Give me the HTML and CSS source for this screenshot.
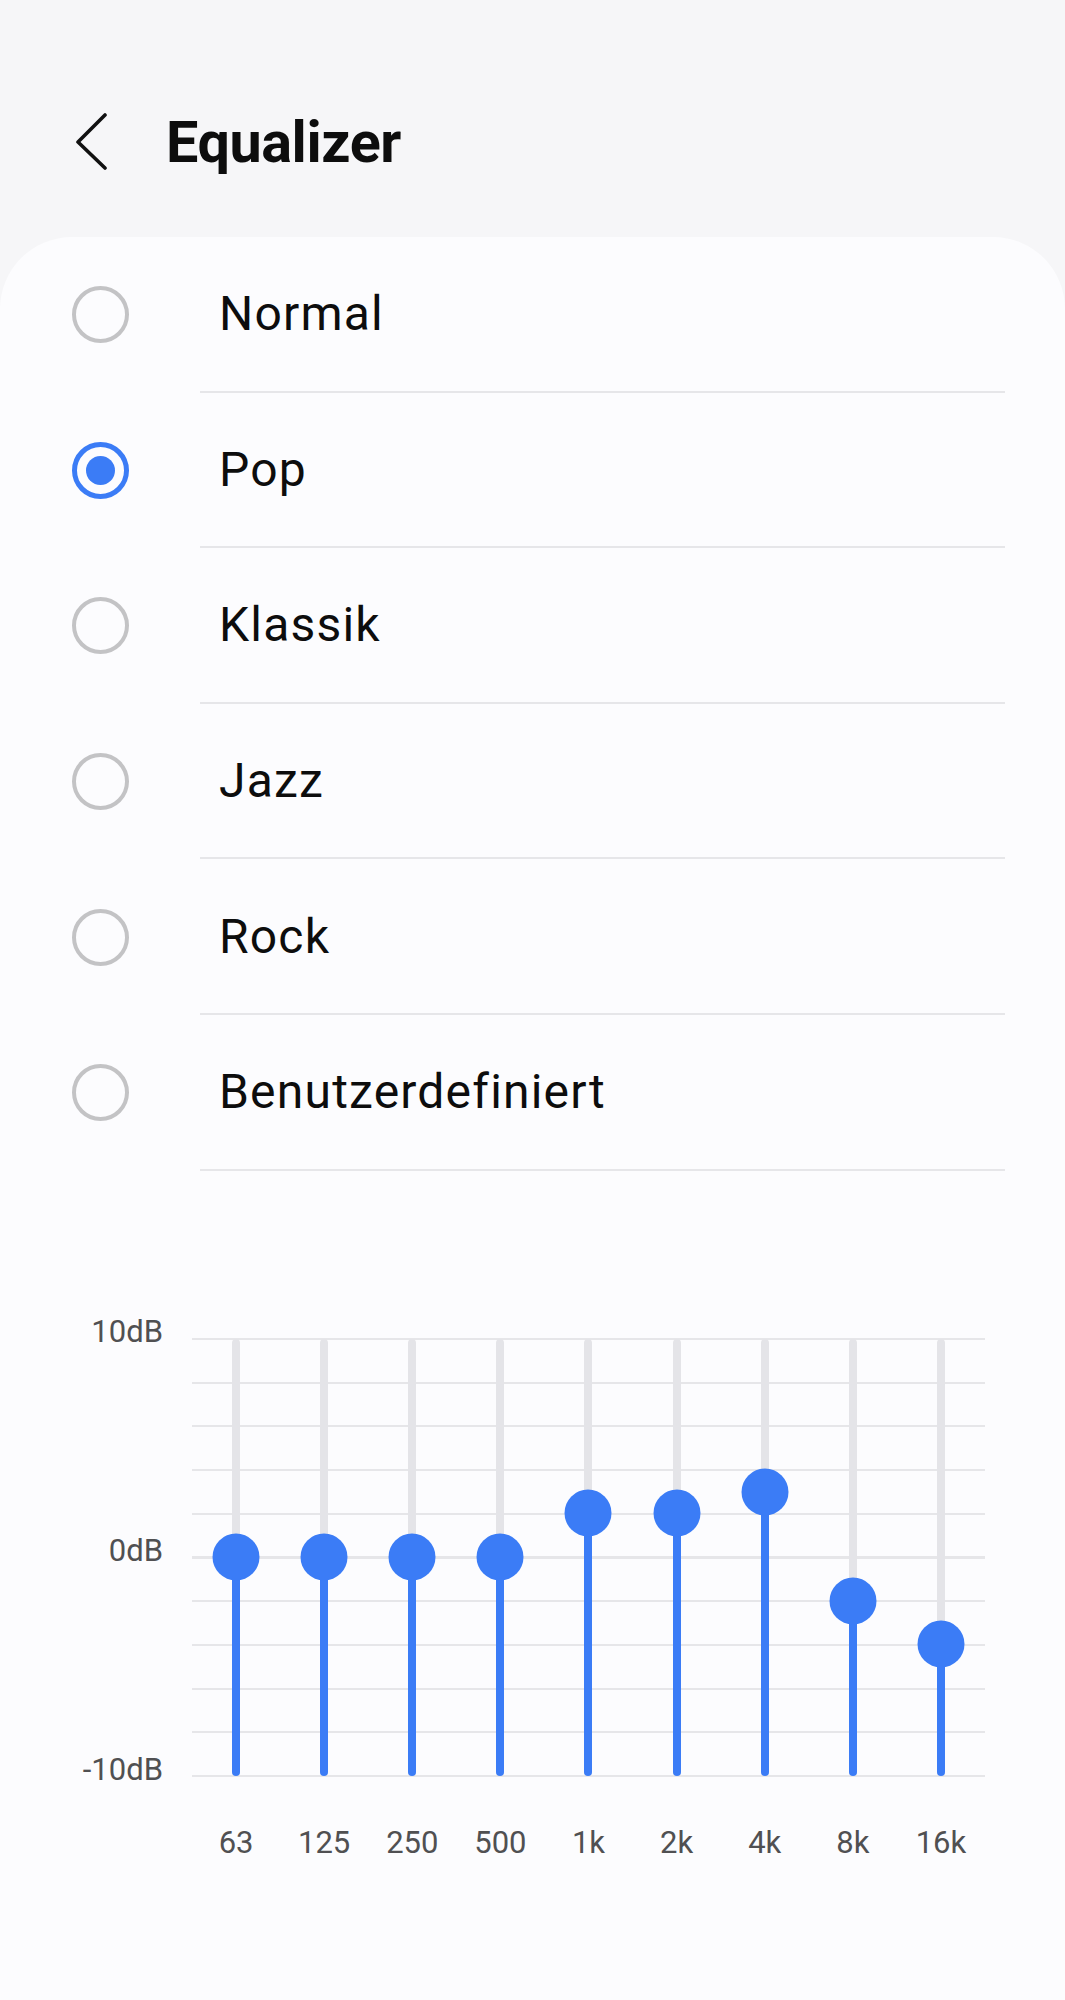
FILE: index.html
```html
<!DOCTYPE html>
<html lang="de">
<head>
<meta charset="utf-8">
<title>Equalizer</title>
<link rel="stylesheet" href="styles.css">
</head>
<body>
<div class="screen">
  <header class="topbar">
    <svg class="back" width="40" height="60" viewBox="0 0 40 60" aria-hidden="true">
      <polyline points="35,2 8,29 35,55" fill="none" stroke="#111" stroke-width="3.6" stroke-linecap="round" stroke-linejoin="round"/>
    </svg>
    <h1 class="title">Equalizer</h1>
  </header>
  <main class="card">
    <ul class="options">
      <li class="option"><span class="radio"></span><span class="label">Normal</span></li>
      <li class="option"><span class="radio selected"></span><span class="label">Pop</span></li>
      <li class="option"><span class="radio"></span><span class="label">Klassik</span></li>
      <li class="option"><span class="radio"></span><span class="label">Jazz</span></li>
      <li class="option"><span class="radio"></span><span class="label">Rock</span></li>
      <li class="option"><span class="radio"></span><span class="label">Benutzerdefiniert</span></li>
    </ul>
    <section class="eq">
      <div class="eq-body">
        <div class="axis"><span>10dB</span><span>0dB</span><span>-10dB</span></div>
        <div class="plot">
          <div class="band"><div class="track"><div class="fill" style="height:50%"></div><div class="knob" style="top:50%"></div></div></div>
          <div class="band"><div class="track"><div class="fill" style="height:50%"></div><div class="knob" style="top:50%"></div></div></div>
          <div class="band"><div class="track"><div class="fill" style="height:50%"></div><div class="knob" style="top:50%"></div></div></div>
          <div class="band"><div class="track"><div class="fill" style="height:50%"></div><div class="knob" style="top:50%"></div></div></div>
          <div class="band"><div class="track"><div class="fill" style="height:60%"></div><div class="knob" style="top:40%"></div></div></div>
          <div class="band"><div class="track"><div class="fill" style="height:60%"></div><div class="knob" style="top:40%"></div></div></div>
          <div class="band"><div class="track"><div class="fill" style="height:65%"></div><div class="knob" style="top:35%"></div></div></div>
          <div class="band"><div class="track"><div class="fill" style="height:40%"></div><div class="knob" style="top:60%"></div></div></div>
          <div class="band"><div class="track"><div class="fill" style="height:30%"></div><div class="knob" style="top:70%"></div></div></div>
        </div>
      </div>
      <div class="freqs">
        <span>63</span><span>125</span><span>250</span><span>500</span><span>1k</span><span>2k</span><span>4k</span><span>8k</span><span>16k</span>
      </div>
    </section>
  </main>
</div>
</body>
</html>
```

FILE: styles.css
```css
* { box-sizing: border-box; }
html, body { margin: 0; padding: 0; }
body {
  background: #f6f6f8;
  font-family: Roboto, "Noto Sans", "Liberation Sans", sans-serif;
  color: #0d0d0d;
}
.screen { width: 1065px; height: 2000px; overflow: hidden; }

.topbar {
  height: 237px;
  padding-top: 100px;
  padding-left: 70px;
  display: flex;
  align-items: flex-start;
}
.back { display: block; margin-top: 13px; flex: none; }
.title {
  margin: 0 0 0 56px;
  font-size: 57.5px;
  font-weight: 700;
  line-height: 86px;
  letter-spacing: -0.4px;
}

.card {
  background: #fcfcfe;
  border-radius: 72px 72px 0 0;
  min-height: 1763px;
}

.options { list-style: none; margin: 0; padding: 0; }
.option {
  height: 155.6px;
  display: flex;
  align-items: center;
}
.radio {
  flex: none;
  width: 57px;
  height: 57px;
  margin-left: 72px;
  border: 4px solid #c3c3c5;
  border-radius: 50%;
  display: flex;
  align-items: center;
  justify-content: center;
}
.radio.selected { border: 5px solid #3b7cf6; }
.radio.selected::after {
  content: "";
  width: 29px;
  height: 29px;
  border-radius: 50%;
  background: #3b7cf6;
}
.label {
  flex: 1;
  align-self: stretch;
  margin-left: 71px;
  margin-right: 60px;
  padding-left: 19px;
  border-bottom: 2px solid #e6e6e9;
  display: flex;
  align-items: center;
  font-size: 48px;
  letter-spacing: 1.2px;
  color: #0d0d0d;
}

.eq { padding-top: 143px; }
.eq-body { display: flex; align-items: flex-start; }
.axis {
  width: 163px;
  height: 474px;
  display: flex;
  flex-direction: column;
  justify-content: space-between;
  align-items: flex-end;
  font-size: 31px;
  line-height: 36px;
  color: #505052;
}
.plot {
  width: 793px;
  height: 439px;
  margin-left: 29px;
  margin-top: 24px;
  display: grid;
  grid-template-columns: repeat(9, 1fr);
  background-image: repeating-linear-gradient(to bottom, #e6e6e9 0, #e6e6e9 2px, transparent 2px, transparent 43.7px);
}
.band { display: flex; justify-content: center; }
.track {
  position: relative;
  width: 8px;
  height: 437px;
  margin-top: 1px;
  background: #e4e4e8;
  border-radius: 4px;
}
.fill {
  position: absolute;
  left: 0;
  bottom: 0;
  width: 100%;
  background: #3b7cf6;
  border-radius: 4px;
}
.knob {
  position: absolute;
  left: 50%;
  width: 47px;
  height: 47px;
  transform: translate(-50%, -50%);
  background: #3b7cf6;
  border-radius: 50%;
}
.freqs {
  margin-left: 192px;
  width: 793px;
  margin-top: 37px;
  display: grid;
  grid-template-columns: repeat(9, 1fr);
  text-align: center;
  font-size: 31px;
  line-height: 36px;
  color: #505052;
}
```
